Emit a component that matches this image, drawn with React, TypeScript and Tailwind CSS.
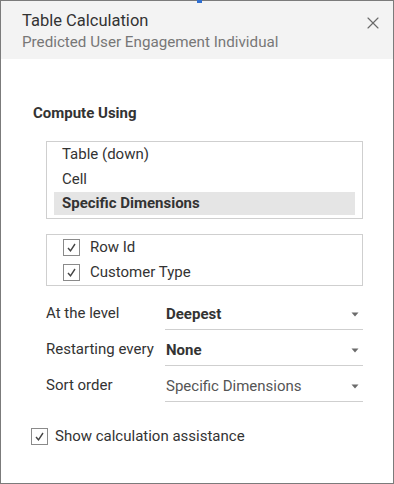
import { X } from "lucide-react";

const font = { fontFamily: "Roboto, 'Open Sans', sans-serif" };

function Check() {
  return (
    <span className="flex h-[17px] w-[17px] shrink-0 items-center justify-center border border-[#8a8a8a] bg-white">
      <svg width="13" height="13" viewBox="0 0 13 13" fill="none">
        <path d="M3 7 L5.5 9.8 L10 3" stroke="#444" strokeWidth="1.4" />
      </svg>
    </span>
  );
}

function Caret() {
  return (
    <svg width="8" height="5" viewBox="0 0 8 5" className="shrink-0">
      <path d="M0.5 0.5 H7.5 L4 4.5 Z" fill="#6b6b6b" />
    </svg>
  );
}

const DROPDOWNS = [
  { label: "At the level", value: "Deepest", bold: true },
  { label: "Restarting every", value: "None", bold: true },
  { label: "Sort order", value: "Specific Dimensions", bold: false },
];

export default function App() {
  return (
    <div
      className="relative flex h-[484px] w-[394px] flex-col border border-[#7b7b7b] bg-white text-[#333]"
      style={font}
    >
      <span className="absolute left-[196px] -top-px h-[3px] w-[5px] bg-[#2f6fd1]" />

      <header className="flex h-[58px] items-start justify-between bg-[#f3f3f3] pl-[21px] pr-[10px] pt-[9px]">
        <div className="flex flex-col">
          <span className="text-[16.5px] leading-[22px] text-[#333]">Table Calculation</span>
          <span className="text-[15.2px] leading-[20px] text-[#777]">
            Predicted User Engagement Individual
          </span>
        </div>
        <button className="mt-[3px] text-[#6a6a6a]" aria-label="Close">
          <X size={20} strokeWidth={1.4} />
        </button>
      </header>

      <div className="flex flex-col pl-[32px] pr-[30px] pt-[45px]">
        <h2 className="text-[15px] font-bold leading-[18px] text-[#333]">Compute Using</h2>

        <div className="ml-[13px] mt-[19px] flex h-[78px] flex-col border border-[#cfcfcf] px-[7px]">
          <div className="flex h-[25px] items-center px-[8px] text-[15px]">Table (down)</div>
          <div className="flex h-[25px] items-center px-[8px] text-[15px]">Cell</div>
          <div className="flex h-[23px] items-center bg-[#e5e5e5] px-[8px] text-[15px] font-bold">
            Specific Dimensions
          </div>
        </div>

        <div className="ml-[13px] mt-[15px] flex h-[52px] flex-col border border-[#cfcfcf] pl-[16px]">
          {["Row Id", "Customer Type"].map((t) => (
            <div key={t} className="flex h-[25px] items-center gap-[10px] text-[15px]">
              <Check />
              {t}
            </div>
          ))}
        </div>

        <div className="ml-[13px] mt-[8px] flex flex-col">
          {DROPDOWNS.map((d) => (
            <div key={d.label} className="flex h-[36px] items-end">
              <span className="w-[119px] pb-[6px] text-[15px] text-[#333]">{d.label}</span>
              <div className="flex h-[36px] flex-1 items-center justify-between border-b border-[#cfcfcf] pl-px pr-[4px] pt-[6px]">
                <span className={`text-[15px] ${d.bold ? "font-bold text-[#333]" : "text-[#555]"}`}>
                  {d.value}
                </span>
                <Caret />
              </div>
            </div>
          ))}
        </div>

        <label className="-ml-[2px] mt-[23px] flex items-center gap-[7px] text-[15px] text-[#333]">
          <Check />
          Show calculation assistance
        </label>
      </div>
    </div>
  );
}
